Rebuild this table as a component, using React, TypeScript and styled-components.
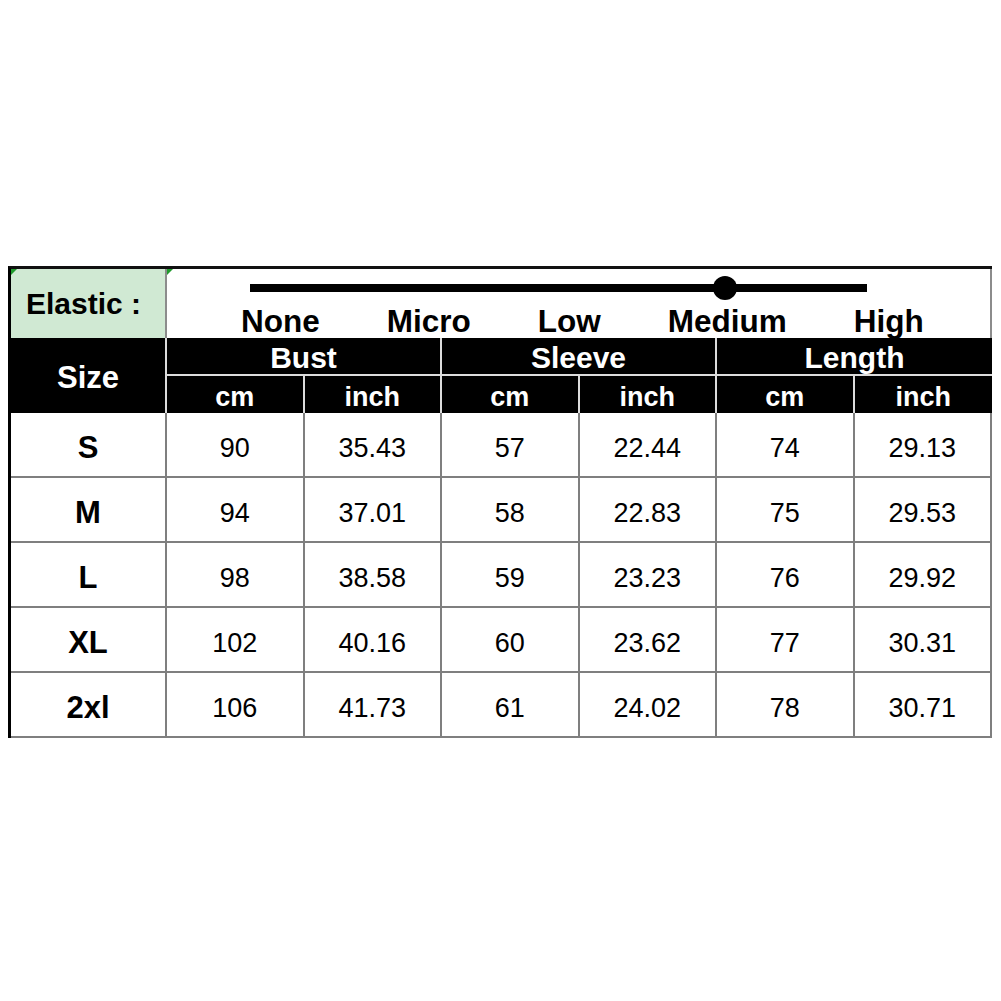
import React from "react";
import styled, { createGlobalStyle } from "styled-components";

const Global = createGlobalStyle`
  *, *::before, *::after { box-sizing: border-box; }
  html, body { margin: 0; padding: 0; background: #fff; }
  body { font-family: "Liberation Sans", Arial, sans-serif; color: #000; }
`;

const Page = styled.div`
  width: 1001px;
  height: 1001px;
  padding: 266px 0 0 8px;
  background: #fff;
`;

const Table = styled.div`
  display: grid;
  grid-template-columns: 156px repeat(6, 137.5px);
  grid-template-rows: 69px 38px 37px repeat(5, 65px);
  width: 984px;
  border-left: 3px solid #000;
  border-top: 3px solid #111;
`;

const Corner = styled.div`
  position: relative;
  &::before {
    content: "";
    position: absolute;
    top: 0;
    left: 0;
    border-top: 6px solid #1f9a2c;
    border-right: 6px solid transparent;
  }
`;

const ElasticLabel = styled(Corner)`
  grid-column: 1;
  background: #d0e9d3;
  border-right: 2px solid #8c8c8c;
  display: flex;
  align-items: center;
  padding-left: 15px;
  font-size: 30px;
  font-weight: 700;
  white-space: pre;
`;

const ElasticScale = styled(Corner)`
  grid-column: 2 / span 6;
  background: #fff;
  border-right: 2px solid #8c8c8c;
  display: flex;
  flex-direction: column;
  padding-top: 15px;
`;

const Track = styled.div`
  position: relative;
  margin-left: 83px;
  width: 617px;
  height: 8px;
  background: #000;
`;

const Thumb = styled.div`
  position: absolute;
  left: 463px;
  top: -8px;
  width: 24px;
  height: 24px;
  border-radius: 50%;
  background: #000;
`;

const Levels = styled.div`
  display: flex;
  margin-top: 14px;
  padding-left: 74px;
  gap: 67px;
  font-size: 31.5px;
  font-weight: 700;
  line-height: 31px;
`;

const HeadCell = styled.div<{ $span?: number; $rows?: number; $last?: boolean; $size?: number; $under?: boolean; $drop?: number }>`
  grid-column: span ${(p) => p.$span ?? 1};
  grid-row: span ${(p) => p.$rows ?? 1};
  background: #000;
  color: #fff;
  font-weight: 700;
  font-size: ${(p) => p.$size ?? 27}px;
  display: flex;
  align-items: center;
  justify-content: center;
  padding-top: ${(p) => p.$drop ?? 0}px;
  border-right: ${(p) => (p.$last ? "0" : "2px solid #dcdcdc")};
  border-bottom: ${(p) => (p.$under ? "2px solid #dcdcdc" : "0")};
`;

const Cell = styled.div<{ $bold?: boolean }>`
  display: flex;
  align-items: center;
  justify-content: center;
  padding-top: ${(p) => (p.$bold ? 6 : 7)}px;
  font-size: ${(p) => (p.$bold ? 31 : 27)}px;
  font-weight: ${(p) => (p.$bold ? 700 : 400)};
  border-right: 2px solid #7f7f7f;
  border-bottom: 2px solid #7f7f7f;
  background: #fff;
`;

const levels = ["None", "Micro", "Low", "Medium", "High"];
const groups = ["Bust", "Sleeve", "Length"];
const rows: string[][] = [
  ["S", "90", "35.43", "57", "22.44", "74", "29.13"],
  ["M", "94", "37.01", "58", "22.83", "75", "29.53"],
  ["L", "98", "38.58", "59", "23.23", "76", "29.92"],
  ["XL", "102", "40.16", "60", "23.62", "77", "30.31"],
  ["2xl", "106", "41.73", "61", "24.02", "78", "30.71"],
];

export default function App() {
  return (
    <Page>
      <Global />
      <Table>
        <ElasticLabel>{"Elastic :"}</ElasticLabel>
        <ElasticScale>
          <Track>
            <Thumb />
          </Track>
          <Levels>
            {levels.map((l) => (
              <span key={l}>{l}</span>
            ))}
          </Levels>
        </ElasticScale>

        <HeadCell $rows={2} $size={31} $drop={4}>Size</HeadCell>
        {groups.map((g, i) => (
          <HeadCell key={g} $span={2} $size={30} $under $drop={3} $last={i === groups.length - 1}>
            {g}
          </HeadCell>
        ))}
        {groups.flatMap((g, i) => [
          <HeadCell key={g + "cm"} $drop={5}>cm</HeadCell>,
          <HeadCell key={g + "in"} $drop={5} $last={i === groups.length - 1}>inch</HeadCell>,
        ])}

        {rows.flatMap((r) =>
          r.map((v, j) => (
            <Cell key={r[0] + j} $bold={j === 0}>
              {v}
            </Cell>
          ))
        )}
      </Table>
    </Page>
  );
}
